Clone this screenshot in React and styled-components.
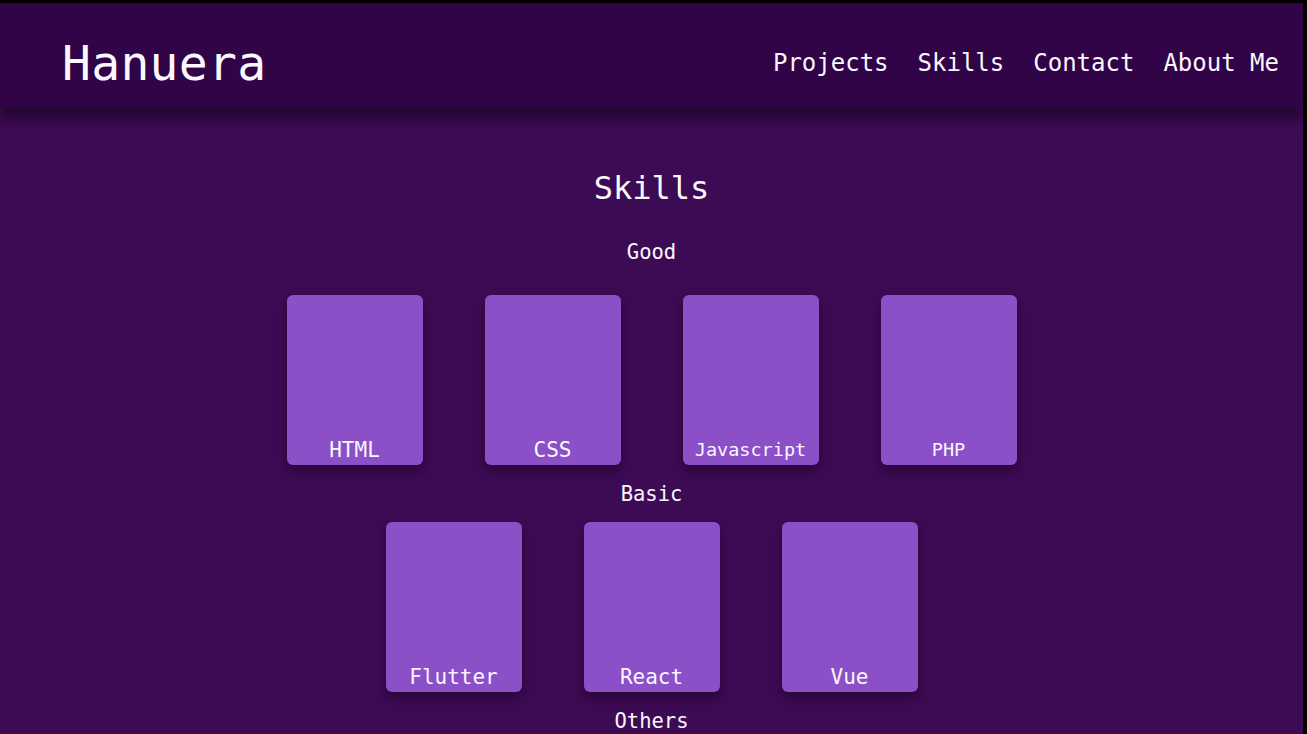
import React from 'react';
import styled, { createGlobalStyle } from 'styled-components';

const GlobalStyle = createGlobalStyle`
  html, body {
    margin: 0;
    padding: 0;
    background: #000;
  }
  * {
    box-sizing: border-box;
  }
`;

const Page = styled.div`
  min-height: 100vh;
  border-top: 3px solid #000;
  border-right: 4px solid #000;
  background-color: #3d0a54;
  font-family: 'DejaVu Sans Mono', 'Liberation Mono', monospace;
  color: #fbf7ff;
  overflow: hidden;
`;

const Header = styled.header`
  position: relative;
  z-index: 2;
  height: 105px;
  display: flex;
  align-items: center;
  justify-content: space-between;
  padding: 0 24px 0 62px;
  background-color: #300446;
  box-shadow: 0 12px 9px rgba(0, 0, 0, 0.38);
`;

const Logo = styled.h1`
  margin: 15px 0 0;
  font-size: 48px;
  font-weight: normal;
  letter-spacing: 0.3px;
`;

const Nav = styled.nav`
  display: flex;
  gap: 29px;
  margin-top: 14px;
`;

const NavLink = styled.a`
  font-size: 24px;
  color: inherit;
  text-decoration: none;
  cursor: pointer;
`;

const Main = styled.main`
  display: flex;
  flex-direction: column;
  align-items: center;
  padding-top: 60px;
`;

const Title = styled.h2`
  margin: 0 0 31px;
  font-size: 32px;
  font-weight: normal;
  line-height: 40px;
`;

const Category = styled.h3`
  margin: ${p => (p.$first ? '0 0 30px' : '16px 0 15px')};
  font-size: 20.5px;
  font-weight: normal;
  line-height: 26px;
`;

const CardRow = styled.div`
  display: flex;
  justify-content: center;
  gap: 62px;
`;

const Card = styled.div`
  width: 136px;
  height: 170px;
  display: flex;
  flex-direction: column;
  justify-content: flex-end;
  align-items: center;
  padding-bottom: 3px;
  border-radius: 6px;
  background-color: #8b4fc8;
  box-shadow: 0 6px 12px rgba(0, 0, 0, 0.35);
`;

const CardLabel = styled.span`
  font-size: ${p => (p.$small ? '18.5px' : '21px')};
  line-height: 24px;
`;

const skills = [
  {
    name: 'Good',
    items: [
      { label: 'HTML' },
      { label: 'CSS' },
      { label: 'Javascript', small: true },
      { label: 'PHP', small: true },
    ],
  },
  {
    name: 'Basic',
    items: [{ label: 'Flutter' }, { label: 'React' }, { label: 'Vue' }],
  },
];

export default function App() {
  return (
    <>
      <GlobalStyle />
      <Page>
        <Header>
          <Logo>Hanuera</Logo>
          <Nav>
            <NavLink>Projects</NavLink>
            <NavLink>Skills</NavLink>
            <NavLink>Contact</NavLink>
            <NavLink>About Me</NavLink>
          </Nav>
        </Header>
        <Main>
          <Title>Skills</Title>
          {skills.map((group, i) => (
            <React.Fragment key={group.name}>
              <Category $first={i === 0}>{group.name}</Category>
              <CardRow>
                {group.items.map(item => (
                  <Card key={item.label}>
                    <CardLabel $small={item.small}>{item.label}</CardLabel>
                  </Card>
                ))}
              </CardRow>
            </React.Fragment>
          ))}
          <Category>Others</Category>
        </Main>
      </Page>
    </>
  );
}
